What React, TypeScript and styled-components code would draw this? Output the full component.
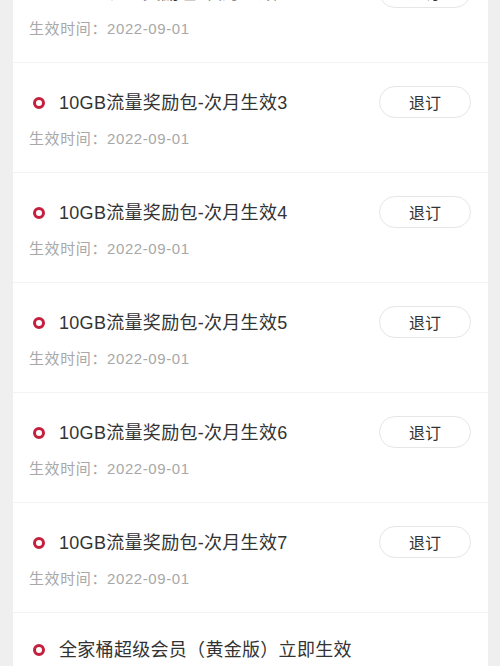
import styled, { createGlobalStyle } from 'styled-components';

const GlobalStyle = createGlobalStyle`
	html, body {
		margin: 0;
		padding: 0;
		background: #efefef;
		overflow: hidden;
	}
	body {
		font-family: 'Liberation Sans', 'Noto Sans CJK SC', sans-serif;
	}
`;

const Page = styled.main`
	height: 666px;
	padding: 0 12px 0 13px;
	overflow: hidden;
`;

const List = styled.ul`
	list-style: none;
	margin: -47px 0 0;
	padding: 0;
	background: #fff;
`;

const Item = styled.li`
	height: 110px;
	padding: 23px 17px 0 20px;
	box-sizing: border-box;
	border-bottom: 1px solid #f3f3f3;
	display: grid;
	grid-template-columns: 1fr auto;
	grid-template-rows: auto auto;
	align-content: start;
	align-items: center;
	row-gap: 9px;
`;

const Title = styled.div`
	display: flex;
	align-items: center;
	gap: 14px;
	padding-top: 2px;
	font-size: 18px;
	line-height: 24px;
	color: #333;
	letter-spacing: 0.3px;
`;

const Dot = styled.span`
	width: 6px;
	height: 6px;
	border: 3px solid #c41f3e;
	border-radius: 50%;
	flex-shrink: 0;
`;

const Date = styled.div`
	grid-column: 1 / -1;
	margin-left: -4px;
	font-size: 15px;
	color: #a8a8a8;
	letter-spacing: 0.6px;
`;

const Cancel = styled.button`
	width: 92px;
	height: 32px;
	border: 1px solid #e6e6e6;
	border-radius: 16px;
	background: #fff;
	font-family: 'Noto Sans CJK SC', sans-serif;
	font-size: 16px;
	color: #333;
	padding: 0;
`;

const items = [
	{ title: '10GB流量奖励包-次月生效2', cancel: true },
	{ title: '10GB流量奖励包-次月生效3', cancel: true },
	{ title: '10GB流量奖励包-次月生效4', cancel: true },
	{ title: '10GB流量奖励包-次月生效5', cancel: true },
	{ title: '10GB流量奖励包-次月生效6', cancel: true },
	{ title: '10GB流量奖励包-次月生效7', cancel: true },
	{ title: '全家桶超级会员（黄金版）立即生效', cancel: false },
];

const App = () => (
	<Page>
		<GlobalStyle />
		<List>
			{items.map((item, index) => (
				<Item key={index}>
					<Title>
						<Dot />
						{item.title}
					</Title>
					{item.cancel ? <Cancel>退订</Cancel> : <span />}
					<Date>生效时间：2022-09-01</Date>
				</Item>
			))}
		</List>
	</Page>
);

export default App;
